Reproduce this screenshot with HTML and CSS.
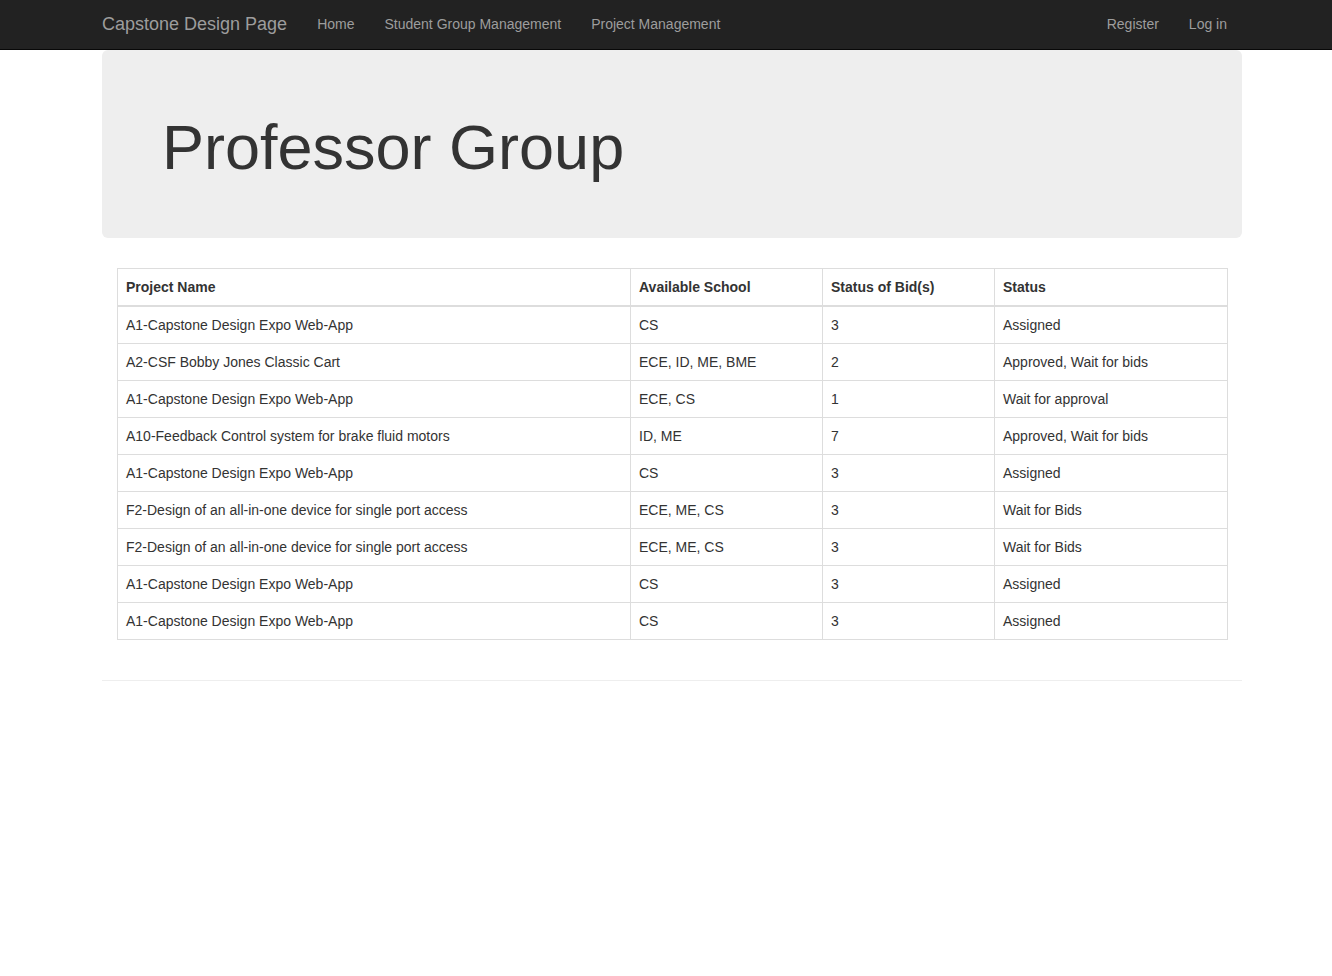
FILE: index.html
```html
<!DOCTYPE html>
<html>
<head>
<meta charset="utf-8">
<title>Professor Group</title>
<link rel="stylesheet" href="styles.css">
</head>
<body>
<nav class="navbar">
  <div class="container nav-inner">
    <div class="nav-left">
      <a class="brand" href="#">Capstone Design Page</a>
      <ul class="nav">
        <li><a href="#">Home</a></li>
        <li><a href="#">Student Group Management</a></li>
        <li><a href="#">Project Management</a></li>
      </ul>
    </div>
    <ul class="nav nav-right">
      <li><a href="#">Register</a></li>
      <li><a href="#">Log in</a></li>
    </ul>
  </div>
</nav>
<main class="container">
  <div class="jumbotron">
    <h1>Professor Group</h1>
  </div>
  <div class="table-wrap">
    <table class="table">
      <thead>
        <tr>
          <th class="c1">Project Name</th>
          <th class="c2">Available School</th>
          <th class="c3">Status of Bid(s)</th>
          <th class="c4">Status</th>
        </tr>
      </thead>
      <tbody>
        <tr><td>A1-Capstone Design Expo Web-App</td><td>CS</td><td>3</td><td>Assigned</td></tr>
        <tr><td>A2-CSF Bobby Jones Classic Cart</td><td>ECE, ID, ME, BME</td><td>2</td><td>Approved, Wait for bids</td></tr>
        <tr><td>A1-Capstone Design Expo Web-App</td><td>ECE, CS</td><td>1</td><td>Wait for approval</td></tr>
        <tr><td>A10-Feedback Control system for brake fluid motors</td><td>ID, ME</td><td>7</td><td>Approved, Wait for bids</td></tr>
        <tr><td>A1-Capstone Design Expo Web-App</td><td>CS</td><td>3</td><td>Assigned</td></tr>
        <tr><td>F2-Design of an all-in-one device for single port access</td><td>ECE, ME, CS</td><td>3</td><td>Wait for Bids</td></tr>
        <tr><td>F2-Design of an all-in-one device for single port access</td><td>ECE, ME, CS</td><td>3</td><td>Wait for Bids</td></tr>
        <tr><td>A1-Capstone Design Expo Web-App</td><td>CS</td><td>3</td><td>Assigned</td></tr>
        <tr><td>A1-Capstone Design Expo Web-App</td><td>CS</td><td>3</td><td>Assigned</td></tr>
      </tbody>
    </table>
  </div>
  <hr class="rule">
</main>
</body>
</html>
```

FILE: styles.css
```css
* { box-sizing: border-box; }
html, body { margin: 0; padding: 0; }
body {
  font-family: "Liberation Sans", Arial, Helvetica, sans-serif;
  font-size: 14px;
  line-height: 20px;
  color: #333;
  background: #fff;
}
.container {
  width: 1140px;
  margin-left: 102px;
}
.navbar {
  background: #222;
  border-bottom: 1px solid #080808;
  height: 50px;
}
.nav-inner {
  display: flex;
  justify-content: space-between;
  height: 49px;
}
.nav-left { display: flex; }
.brand {
  display: block;
  margin-left: -15px;
  padding: 14px 15px 15px;
  font-size: 18px;
  line-height: 20px;
  height: 49px;
  color: #9d9d9d;
  text-decoration: none;
}
.nav {
  display: flex;
  list-style: none;
  margin: 0;
  padding: 0;
}
.nav a {
  display: block;
  padding: 14px 15px 15px;
  line-height: 20px;
  color: #9d9d9d;
  text-decoration: none;
}
.nav-right { margin-right: 0; }
.jumbotron {
  background: #eee;
  border-radius: 6px;
  padding: 48px 60px;
  margin-bottom: 30px;
  height: 188px;
}
.jumbotron h1 {
  margin: 15px 0 0;
  font-size: 63px;
  line-height: 69px;
  font-weight: 500;
  color: #333;
}
.table-wrap { padding: 0 15px; }
.table {
  width: 1110px;
  border-collapse: collapse;
  border-spacing: 0;
  border: 1px solid #ddd;
  margin-bottom: 20px;
  table-layout: fixed;
}
.table th, .table td {
  border: 1px solid #ddd;
  padding: 8px;
  line-height: 20px;
  text-align: left;
  vertical-align: top;
}
.table thead th {
  border-bottom-width: 2px;
  font-weight: bold;
}
.c1 { width: 513px; }
.c2 { width: 192px; }
.c3 { width: 172px; }
.c4 { width: 233px; }
.rule {
  margin: 40px 0 20px;
  border: 0;
  border-top: 1px solid #eee;
  height: 0;
}
```
